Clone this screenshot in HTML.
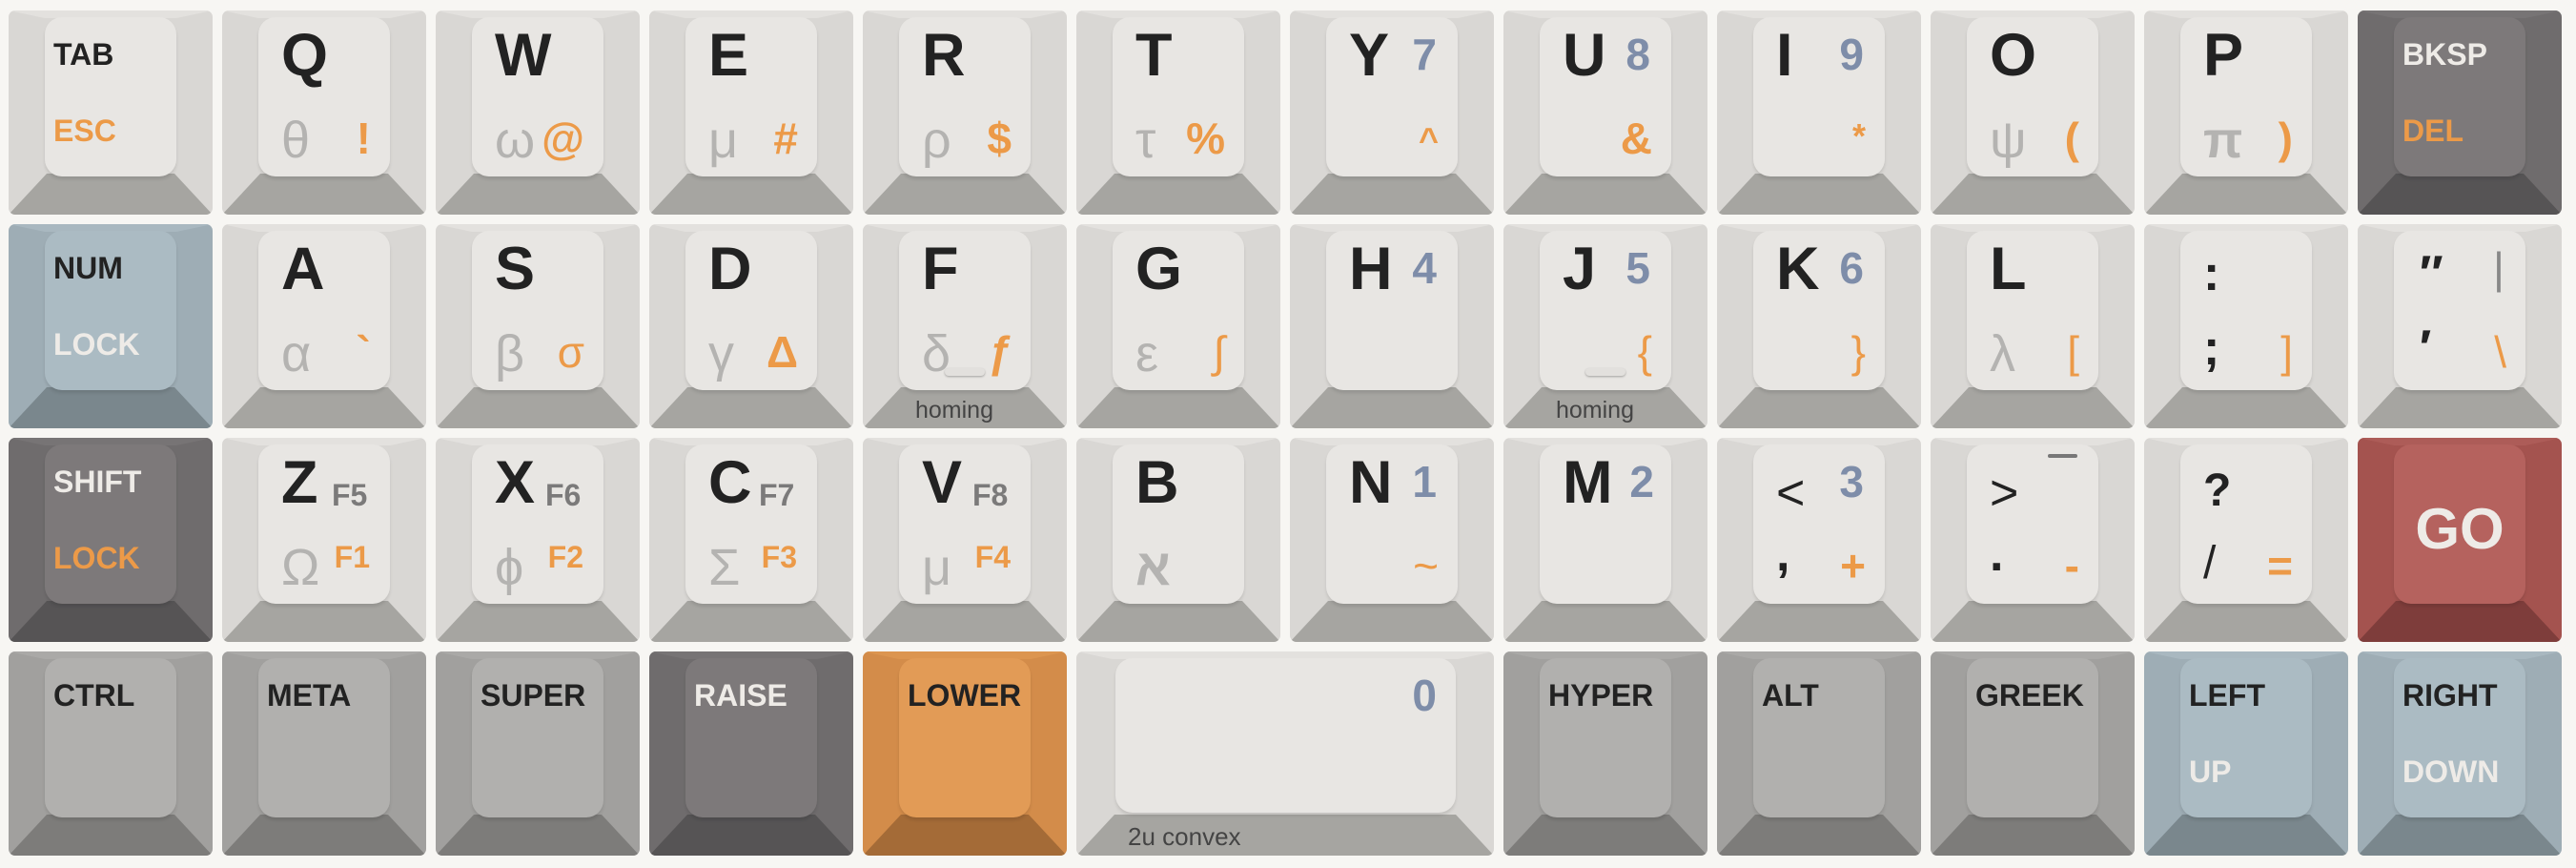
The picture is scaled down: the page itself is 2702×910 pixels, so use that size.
<!DOCTYPE html>
<html><head><meta charset="utf-8"><style>
html,body{margin:0;padding:0}
body{width:2702px;height:910px;background:#f7f6f3;position:relative;overflow:hidden;font-family:"Liberation Sans",sans-serif}
.k{position:absolute;width:214px;height:214px;border-radius:7px;overflow:hidden;background:var(--s)}
.k::before{content:"";position:absolute;inset:0;background:var(--t);clip-path:polygon(0 0,100% 0,calc(100% - 38px) 8px,38px 8px)}
.k::after{content:"";position:absolute;inset:0;background:var(--b);clip-path:polygon(0 100%,40px 171px,calc(100% - 40px) 171px,100% 100%)}
.f{position:absolute;z-index:1;left:38px;top:7px;right:38px;height:167px;border-radius:18px;background:var(--f);box-shadow:0 3px 3px rgba(0,0,0,.10)}
.k span{position:absolute;z-index:2;line-height:1;white-space:nowrap}
.lt{--s:#d9d7d4;--t:#e3e1de;--b:#a6a5a1;--f:#e8e6e3}
.bl{--s:#9eadb5;--t:#a9b8c0;--b:#7a878d;--f:#abbbc3}
.dk{--s:#6f6c6d;--t:#777475;--b:#565455;--f:#7d797a}
.md{--s:#a1a09e;--t:#aaa9a7;--b:#7d7c7a;--f:#b1b0ae}
.or{--s:#d38c4a;--t:#dc9550;--b:#a46b37;--f:#e29b56}
.rd{--s:#a4534f;--t:#ad5c58;--b:#7e3d3b;--f:#b5625e}
.L{left:62px;top:16px;font-size:63px;font-weight:bold;color:#222}
.N{right:60px;top:23px;font-size:46px;font-weight:bold;color:#7e8da9}
.M{left:47px;top:30px;font-size:32px;font-weight:bold;color:#222}
.M2{left:47px;top:110px;font-size:32px;font-weight:bold;color:#ec9a48}
.G{left:62px;top:109px;font-size:54px;color:#b4b3b1}
.S{right:58px;top:111px;font-size:46px;font-weight:bold;color:#ec9a48}
.Fg{left:115px;top:44px;font-size:32px;font-weight:bold;color:#7b7a7a}
.Fo{right:59px;top:109px;font-size:32px;font-weight:bold;color:#ec9a48}
.P{left:62px;top:26px;font-size:52px;font-weight:bold;color:#222}
.P2{left:62px;top:104px;font-size:52px;font-weight:bold;color:#222}
.w{color:#eeebe7 !important}
.lab{left:55px;top:183px;font-size:25px;color:#444}
.hb{position:absolute;z-index:2;left:86px;top:151px;width:42px;height:8px;border-radius:4px;background:#e2e0dd;box-shadow:0 1px 2px rgba(0,0,0,.3)}
.bar{position:absolute;z-index:2;left:123px;top:17px;width:31px;height:4px;border-radius:2px;background:#777}
</style></head><body>

<!-- Row 1 -->
<div class="k lt" style="left:9px;top:11px"><div class="f"></div><span class="M">TAB</span><span class="M2">ESC</span></div>
<div class="k lt" style="left:233px;top:11px"><div class="f"></div><span class="L">Q</span><span class="G">θ</span><span class="S">!</span></div>
<div class="k lt" style="left:457px;top:11px"><div class="f"></div><span class="L">W</span><span class="G">ω</span><span class="S">@</span></div>
<div class="k lt" style="left:681px;top:11px"><div class="f"></div><span class="L">E</span><span class="G">μ</span><span class="S">#</span></div>
<div class="k lt" style="left:905px;top:11px"><div class="f"></div><span class="L">R</span><span class="G">ρ</span><span class="S">$</span></div>
<div class="k lt" style="left:1129px;top:11px"><div class="f"></div><span class="L">T</span><span class="G">τ</span><span class="S">%</span></div>
<div class="k lt" style="left:1353px;top:11px"><div class="f"></div><span class="L">Y</span><span class="N">7</span><span class="S" style="font-size:36px;top:118px">^</span></div>
<div class="k lt" style="left:1577px;top:11px"><div class="f"></div><span class="L">U</span><span class="N">8</span><span class="S">&amp;</span></div>
<div class="k lt" style="left:1801px;top:11px"><div class="f"></div><span class="L">I</span><span class="N">9</span><span class="S" style="font-size:36px;top:114px">*</span></div>
<div class="k lt" style="left:2025px;top:11px"><div class="f"></div><span class="L">O</span><span class="G">ψ</span><span class="S">(</span></div>
<div class="k lt" style="left:2249px;top:11px"><div class="f"></div><span class="L">P</span><span class="G" style="font-weight:bold">π</span><span class="S">)</span></div>
<div class="k dk" style="left:2473px;top:11px"><div class="f"></div><span class="M w">BKSP</span><span class="M2">DEL</span></div>

<!-- Row 2 -->
<div class="k bl" style="left:9px;top:235px"><div class="f"></div><span class="M">NUM</span><span class="M2 w">LOCK</span></div>
<div class="k lt" style="left:233px;top:235px"><div class="f"></div><span class="L">A</span><span class="G">α</span><span class="S">`</span></div>
<div class="k lt" style="left:457px;top:235px"><div class="f"></div><span class="L">S</span><span class="G">β</span><span class="S" style="font-weight:normal">σ</span></div>
<div class="k lt" style="left:681px;top:235px"><div class="f"></div><span class="L">D</span><span class="G">γ</span><span class="S">Δ</span></div>
<div class="k lt" style="left:905px;top:235px"><div class="f"></div><span class="L">F</span><span class="G">δ</span><span class="S" style="font-style:italic">ƒ</span><div class="hb"></div><span class="lab">homing</span></div>
<div class="k lt" style="left:1129px;top:235px"><div class="f"></div><span class="L">G</span><span class="G">ε</span><span class="S" style="font-weight:normal">∫</span></div>
<div class="k lt" style="left:1353px;top:235px"><div class="f"></div><span class="L">H</span><span class="N">4</span></div>
<div class="k lt" style="left:1577px;top:235px"><div class="f"></div><span class="L">J</span><span class="N">5</span><span class="S" style="font-weight:normal">{</span><div class="hb"></div><span class="lab">homing</span></div>
<div class="k lt" style="left:1801px;top:235px"><div class="f"></div><span class="L">K</span><span class="N">6</span><span class="S" style="font-weight:normal">}</span></div>
<div class="k lt" style="left:2025px;top:235px"><div class="f"></div><span class="L">L</span><span class="G">λ</span><span class="S" style="font-weight:normal">[</span></div>
<div class="k lt" style="left:2249px;top:235px"><div class="f"></div><span class="P">:</span><span class="P2">;</span><span class="S" style="font-weight:normal">]</span></div>
<div class="k lt" style="left:2473px;top:235px"><div class="f"></div><span class="P" style="font-style:italic">″</span><span class="P2" style="font-style:italic">′</span><span class="N" style="color:#888;font-weight:normal">|</span><span class="S" style="font-weight:normal">\</span></div>

<!-- Row 3 -->
<div class="k dk" style="left:9px;top:459px"><div class="f"></div><span class="M w">SHIFT</span><span class="M2">LOCK</span></div>
<div class="k lt" style="left:233px;top:459px"><div class="f"></div><span class="L">Z</span><span class="Fg">F5</span><span class="G">Ω</span><span class="Fo">F1</span></div>
<div class="k lt" style="left:457px;top:459px"><div class="f"></div><span class="L">X</span><span class="Fg">F6</span><span class="G">ϕ</span><span class="Fo">F2</span></div>
<div class="k lt" style="left:681px;top:459px"><div class="f"></div><span class="L">C</span><span class="Fg">F7</span><span class="G">Σ</span><span class="Fo">F3</span></div>
<div class="k lt" style="left:905px;top:459px"><div class="f"></div><span class="L">V</span><span class="Fg">F8</span><span class="G">μ</span><span class="Fo">F4</span></div>
<div class="k lt" style="left:1129px;top:459px"><div class="f"></div><span class="L">B</span><span class="G" style="font-weight:bold">א</span></div>
<div class="k lt" style="left:1353px;top:459px"><div class="f"></div><span class="L">N</span><span class="N">1</span><span class="S" style="font-weight:normal">~</span></div>
<div class="k lt" style="left:1577px;top:459px"><div class="f"></div><span class="L">M</span><span class="N" style="right:56px">2</span></div>
<div class="k lt" style="left:1801px;top:459px"><div class="f"></div><span class="P" style="font-weight:normal;top:32px">&lt;</span><span class="N">3</span><span class="P2" style="top:96px">,</span><span class="S">+</span></div>
<div class="k lt" style="left:2025px;top:459px"><div class="f"></div><span class="P" style="font-weight:normal;top:32px">&gt;</span><div class="bar"></div><span class="P2" style="top:96px">.</span><span class="S">-</span></div>
<div class="k lt" style="left:2249px;top:459px"><div class="f"></div><span class="P" style="top:32px;font-size:48px">?</span><span class="P2" style="font-weight:normal;top:108px;font-size:48px">/</span><span class="S">=</span></div>
<div class="k rd" style="left:2473px;top:459px"><div class="f"></div><span class="w" style="left:0;right:0;text-align:center;top:66px;font-size:60px;font-weight:bold">GO</span></div>

<!-- Row 4 -->
<div class="k md" style="left:9px;top:683px"><div class="f"></div><span class="M">CTRL</span></div>
<div class="k md" style="left:233px;top:683px"><div class="f"></div><span class="M">META</span></div>
<div class="k md" style="left:457px;top:683px"><div class="f"></div><span class="M">SUPER</span></div>
<div class="k dk" style="left:681px;top:683px"><div class="f"></div><span class="M w">RAISE</span></div>
<div class="k or" style="left:905px;top:683px"><div class="f"></div><span class="M">LOWER</span></div>
<div class="k lt" style="left:1129px;top:683px;width:438px"><div class="f" style="left:41px;right:40px;height:162px"></div><span class="N" style="right:60px">0</span><span class="lab" style="left:54px;top:181px;font-size:26px">2u convex</span></div>
<div class="k md" style="left:1577px;top:683px"><div class="f"></div><span class="M">HYPER</span></div>
<div class="k md" style="left:1801px;top:683px"><div class="f"></div><span class="M">ALT</span></div>
<div class="k md" style="left:2025px;top:683px"><div class="f"></div><span class="M">GREEK</span></div>
<div class="k bl" style="left:2249px;top:683px"><div class="f"></div><span class="M">LEFT</span><span class="M2 w">UP</span></div>
<div class="k bl" style="left:2473px;top:683px"><div class="f"></div><span class="M">RIGHT</span><span class="M2 w">DOWN</span></div>

</body></html>
